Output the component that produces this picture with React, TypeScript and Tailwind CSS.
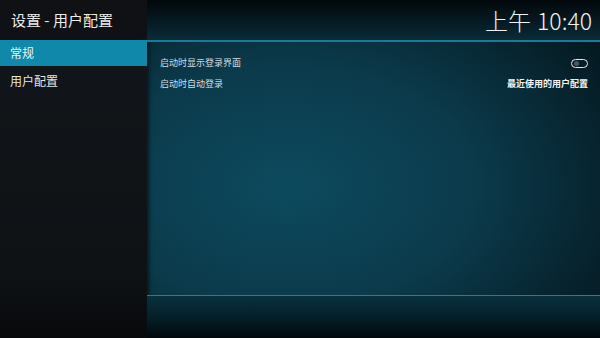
const font = "font-['Noto_Sans_CJK_SC','Noto_Sans',sans-serif]";

export default function App() {
  return (
    <div
      className={`relative flex w-[600px] h-[338px] overflow-hidden bg-[radial-gradient(ellipse_70%_80%_at_48%_55%,#0d4a5e_0%,#0b3a4b_45%,#06202a_80%,#03121a_100%)] ${font}`}
    >
      <aside className="flex w-[147px] shrink-0 flex-col bg-[#111417] shadow-[2px_0_4px_rgba(0,0,0,0.6)]">
        <div className="flex h-[40px] items-center bg-[#0f1114] pl-[11px] text-[15px] text-[#ececec]">
          设置 - 用户配置
        </div>
        <div className="flex flex-1 flex-col bg-[linear-gradient(to_bottom,#121519_0%,#0f1215_80%,#07090b_100%)]">
          <div className="flex h-[26px] items-center bg-[#0f88a9] pl-[10px] text-[12px] text-[#e8f4f8]">
            常规
          </div>
          <div className="flex h-[29px] items-center pl-[10px] text-[12px] text-[#e6e6e6]">
            用户配置
          </div>
        </div>
      </aside>

      <main className="flex flex-1 flex-col">
        <div className="flex h-[40px] items-center justify-end gap-[6px] bg-[linear-gradient(to_bottom,#02080b_0%,#061c24_60%,#0a2c38_100%)] pr-[8px] text-[23px] font-light text-[#f2f2f2]">
          <span>上午</span>
          <span>10:40</span>
        </div>
        <div className="h-[2px] bg-[#1a7b98]" />
        <div className="flex flex-col pl-[13px] pr-[12px] pt-[11px] text-[9px] text-[#d8dde0]">
          <div className="flex h-[20px] items-center justify-between">
            <span>启动时显示登录界面</span>
            <span className="flex h-[9px] w-[17px] items-center rounded-full border border-[#e8e8e8] px-[2px]">
              <span className="h-[5px] w-[5px] rounded-full bg-[#555]" />
            </span>
          </div>
          <div className="flex h-[22px] items-center justify-between">
            <span>启动时自动登录</span>
            <span className="font-bold text-[#f4f4f4]">最近使用的用户配置</span>
          </div>
        </div>
        <div className="flex-1" />
        <div className="h-px bg-[#1f7f9c]" />
        <div className="h-[42px] bg-[linear-gradient(to_bottom,#08303d_0%,#05202a_50%,#01080c_100%)]" />
      </main>
    </div>
  );
}
